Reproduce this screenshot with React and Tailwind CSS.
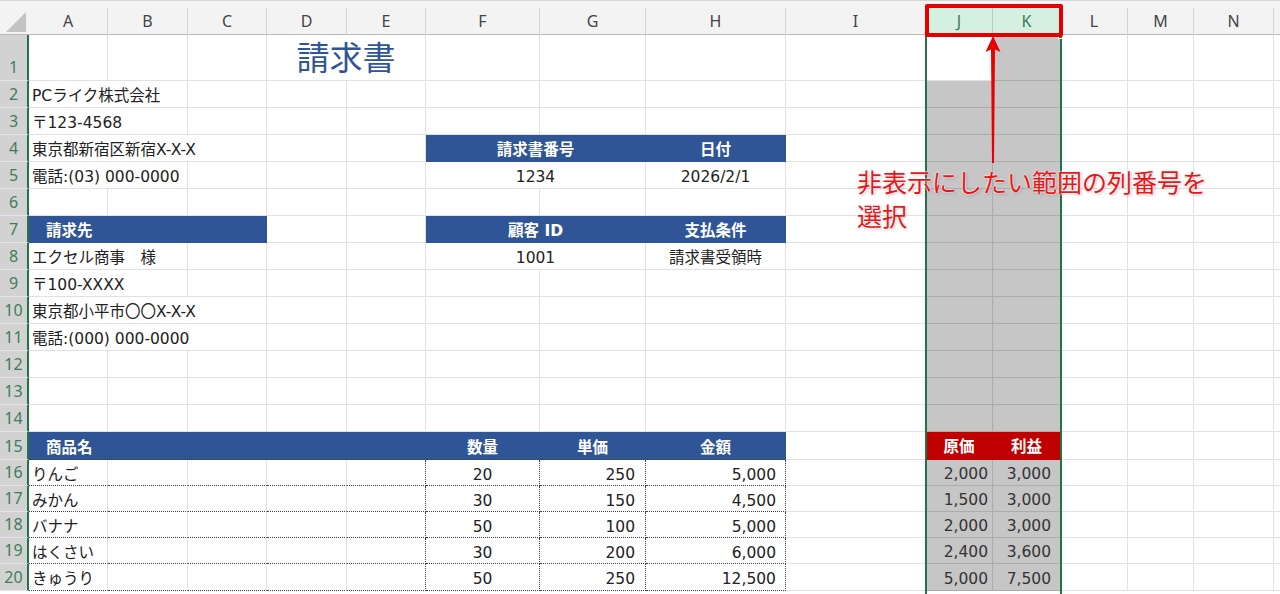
import React from 'react'

// column grid: row header + A..N + filler
const COLS = 'grid grid-cols-[29px_79px_80px_79px_80px_79px_114px_106px_140px_140px_67px_68px_67px_66px_80px_1fr] grid-rows-[100%]'

const G = 'border-r border-b border-[#e1e1e1]'
const BLUE = 'bg-[#2f5597] border-r border-b border-[#2f5597] text-white font-bold'
const GRAY = 'bg-[#c6c6c6] border-r border-b border-[#acacac] text-[#333]'
const RED = 'bg-[#c00000] border-r border-b border-[#c00000] text-white font-bold'
const DOT_L = 'border-r border-b border-r-[#e1e1e1] border-b-[#404040] [border-bottom-style:dotted]'
const DOT = 'border-r border-b border-dotted border-[#404040]'
const HEAD15 = 'bg-[#2f5597] border-r border-b border-r-[#2f5597] border-b-[#404040] [border-bottom-style:dotted] text-white font-bold'

const SPAN = { 1: '', 2: 'col-span-2', 3: 'col-span-3', 5: 'col-span-5' }

const letters = ['A', 'B', 'C', 'D', 'E', 'F', 'G', 'H', 'I', 'J', 'K', 'L', 'M', 'N']

const items = [
    ['りんご', '20', '250', '5,000', '2,000', '3,000'],
    ['みかん', '30', '150', '4,500', '1,500', '3,000'],
    ['バナナ', '50', '100', '5,000', '2,000', '3,000'],
    ['はくさい', '30', '200', '6,000', '2,400', '3,600'],
    ['きゅうり', '50', '250', '12,500', '5,000', '7,500'],
]
const itemHeights = ['h-[26px]', 'h-[26px]', 'h-[26px]', 'h-[26px]', 'h-[27px]']

function Cell({ span = 1, className = G, children }) {
    return (
        <div className={`${SPAN[span]} ${className} flex items-center whitespace-nowrap overflow-visible`}>
            {children}
        </div>
    )
}

function HeaderRow() {
    return (
        <div className="h-[35px] bg-[#f3f3f3] border-t border-[#d6d6d6] pt-[7px]">
            <div className={`${COLS} h-[27px]`}>
                <div className="relative border-b border-[#b8b8b8]">
                    <svg className="absolute right-[3px] bottom-[2px]" width="20" height="20" viewBox="0 0 20 20">
                        <polygon points="20,0 20,20 0,20" fill="#c3c3c3" />
                    </svg>
                </div>
                {letters.map((l) => {
                    const sel = l === 'J' || l === 'K'
                    return (
                        <div
                            key={l}
                            className={sel
                                ? "flex items-center justify-center border-r border-b border-r-[#b9cfc1] border-b-[#b8b8b8] bg-[#d3f0e0] text-[#3d7a57] text-[16px] font-['Noto_Sans',sans-serif]"
                                : "flex items-center justify-center border-r border-b border-r-[#d4d4d4] border-b-[#b8b8b8] text-[#444] text-[16px] font-['Noto_Sans',sans-serif]"}
                        >
                            {l}
                        </div>
                    )
                })}
                <div className="border-b border-[#b8b8b8]" />
            </div>
        </div>
    )
}

function Row({ n, h = 'h-[27px]', children }) {
    return (
        <div className={`${COLS} ${h} overflow-visible`}>
            <div className="flex items-end justify-center pb-[2px] bg-[#d2d2d2] border-b border-[#e4e4e4] border-r-2 border-r-[#227447] text-[16px] leading-[22px] text-[#3f7d5a] font-['Noto_Sans',sans-serif]">
                {n}
            </div>
            {children}
        </div>
    )
}

function Right({ n, j, k }) {
    return (
        <>
            <Cell />
            {n === 15 ? (
                <>
                    <Cell className={`${RED} justify-center pt-[5px]`}>原価</Cell>
                    <Cell className={`${RED} justify-center pt-[5px]`}>利益</Cell>
                </>
            ) : (
                <>
                    <Cell className={`${n === 1 ? G : GRAY} justify-end pr-[4px] pt-[5px]`}>{j}</Cell>
                    <Cell className={`${GRAY} justify-end pr-[9px] pt-[5px]`}>{k}</Cell>
                </>
            )}
            <Cell />
            <Cell />
            <Cell />
            <div className="border-b border-[#e1e1e1]" />
        </>
    )
}

const Blanks = ({ count }) => Array.from({ length: count }, (_, i) => <Cell key={i} />)

// text cell: slightly bottom-weighted like Excel's bottom alignment
const T = 'pt-[6px]'

export default function App() {
    return (
        <div className="relative w-[1280px] h-[594px] overflow-hidden bg-white text-[15.5px] text-[#222] font-['DejaVu_Sans','Noto_Sans_CJK_JP',sans-serif]">
            <HeaderRow />

            <Row n={1} h="h-[46px]">
                <Blanks count={3} />
                <Cell span={2} className={`${G} justify-center pt-[2px] pb-[5px] leading-none text-[33px] text-[#2f5597] font-['Noto_Sans_CJK_JP',sans-serif]`}>請求書</Cell>
                <Blanks count={3} />
                <Right n={1} />
            </Row>
            <Row n={2}>
                <Cell span={2} className={`${G} ${T} pl-[3px]`}>PCライク株式会社</Cell>
                <Blanks count={6} />
                <Right n={2} />
            </Row>
            <Row n={3}>
                <Cell span={2} className={`${G} ${T} pl-[3px]`}>〒123-4568</Cell>
                <Blanks count={6} />
                <Right n={3} />
            </Row>
            <Row n={4}>
                <Cell span={3} className={`${G} ${T} pl-[3px]`}>東京都新宿区新宿X-X-X</Cell>
                <Blanks count={2} />
                <Cell span={2} className={`${BLUE} ${T} justify-center`}>請求書番号</Cell>
                <Cell className={`${BLUE} ${T} justify-center`}>日付</Cell>
                <Right n={4} />
            </Row>
            <Row n={5}>
                <Cell span={2} className={`${G} ${T} pl-[3px]`}>電話:(03) 000-0000</Cell>
                <Blanks count={3} />
                <Cell span={2} className={`${G} ${T} justify-center`}>1234</Cell>
                <Cell className={`${G} ${T} justify-center`}>2026/2/1</Cell>
                <Right n={5} />
            </Row>
            <Row n={6}>
                <Blanks count={8} />
                <Right n={6} />
            </Row>
            <Row n={7}>
                <Cell span={3} className={`${BLUE} ${T} pl-[17px]`}>請求先</Cell>
                <Blanks count={2} />
                <Cell span={2} className={`${BLUE} ${T} justify-center`}>顧客 ID</Cell>
                <Cell className={`${BLUE} ${T} justify-center`}>支払条件</Cell>
                <Right n={7} />
            </Row>
            <Row n={8}>
                <Cell span={2} className={`${G} ${T} pl-[3px]`}>エクセル商事　様</Cell>
                <Blanks count={3} />
                <Cell span={2} className={`${G} ${T} justify-center`}>1001</Cell>
                <Cell className={`${G} ${T} justify-center`}>請求書受領時</Cell>
                <Right n={8} />
            </Row>
            <Row n={9}>
                <Cell span={2} className={`${G} ${T} pl-[3px]`}>〒100-XXXX</Cell>
                <Blanks count={6} />
                <Right n={9} />
            </Row>
            <Row n={10}>
                <Cell span={3} className={`${G} ${T} pl-[3px]`}>東京都小平市〇〇X-X-X</Cell>
                <Blanks count={5} />
                <Right n={10} />
            </Row>
            <Row n={11}>
                <Cell span={3} className={`${G} ${T} pl-[3px]`}>電話:(000) 000-0000</Cell>
                <Blanks count={5} />
                <Right n={11} />
            </Row>
            {[12, 13, 14].map((n) => (
                <Row key={n} n={n}>
                    <Blanks count={8} />
                    <Right n={n} />
                </Row>
            ))}
            <Row n={15} h="h-[28px]">
                <Cell span={5} className={`${HEAD15} ${T} pl-[17px]`}>商品名</Cell>
                <Cell className={`${HEAD15} ${T} justify-center`}>数量</Cell>
                <Cell className={`${HEAD15} ${T} justify-center`}>単価</Cell>
                <Cell className={`${HEAD15} ${T} justify-center`}>金額</Cell>
                <Right n={15} />
            </Row>
            {items.map((it, idx) => (
                <Row key={idx} n={16 + idx} h={itemHeights[idx]}>
                    <Cell className={`${DOT_L} ${T} pl-[3px]`}>{it[0]}</Cell>
                    <Cell className={DOT_L} />
                    <Cell className={DOT_L} />
                    <Cell className={DOT_L} />
                    <Cell className={DOT} />
                    <Cell className={`${DOT} ${T} justify-center`}>{it[1]}</Cell>
                    <Cell className={`${DOT} ${T} justify-end pr-[10px]`}>{it[2]}</Cell>
                    <Cell className={`${DOT} ${T} justify-end pr-[9px]`}>{it[3]}</Cell>
                    <Right n={16 + idx} j={it[4]} k={it[5]} />
                </Row>
            ))}

            {/* selection outline on columns J:K */}
            <div className="absolute left-[925px] top-[35px] w-[137px] h-[559px] border-x-2 border-[#227447] pointer-events-none" />
            <div className="absolute left-[1058px] top-[34px] w-[5px] h-[5px] bg-[#227447] border border-white" />

            {/* red callout box around the column headers */}
            <div className="absolute left-[925px] top-[4px] w-[138px] h-[33px] border-4 border-[#e60000] rounded-[2px] pointer-events-none" />

            {/* arrow */}
            <svg className="absolute left-[985px] top-[36px]" width="16" height="128" viewBox="0 0 16 128">
                <polygon points="8,0 15.5,16 10,13.5 9,127 7,127 6,13.5 0.5,16" fill="#e60000" />
            </svg>

            {/* annotation */}
            <div className="absolute left-[857px] top-[164px] text-[25px] leading-[34px] text-[#e8161b] whitespace-nowrap font-['Noto_Sans_CJK_JP',sans-serif] [text-shadow:0_0_2px_#fff,0_0_2px_#fff,1px_1px_3px_rgba(0,0,0,0.3)]">
                非表示にしたい範囲の列番号を
                <br />
                選択
            </div>
        </div>
    )
}
